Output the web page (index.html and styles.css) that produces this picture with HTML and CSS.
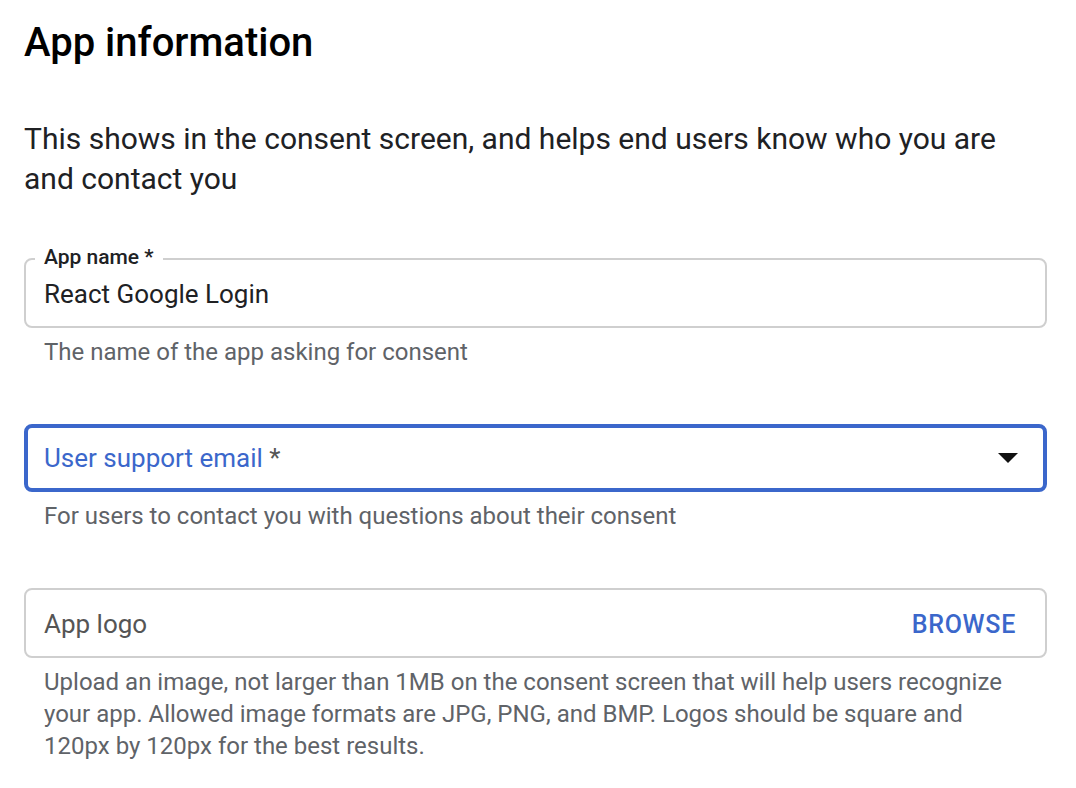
FILE: index.html
```html
<!DOCTYPE html>
<html lang="en">
<head>
<meta charset="utf-8">
<title>App information</title>
<link rel="stylesheet" href="styles.css">
</head>
<body>
<main class="page">
  <h1 class="title">App information</h1>
  <p class="intro">This shows in the consent screen, and helps end users know who you are and contact you</p>

  <div class="field-group first">
    <div class="field">
      <span class="float-label">App name *</span>
      <span class="value">React Google Login</span>
    </div>
    <p class="hint">The name of the app asking for consent</p>
  </div>

  <div class="field-group">
    <div class="field field-focused">
      <span class="placeholder-blue">User support email <span class="req">*</span></span>
      <svg class="caret" width="20" height="10" viewBox="0 0 20 10" aria-hidden="true"><path d="M0 0h20L10 10z" fill="#111"/></svg>
    </div>
    <p class="hint">For users to contact you with questions about their consent</p>
  </div>

  <div class="field-group">
    <div class="field">
      <span class="placeholder">App logo</span>
      <span class="browse">BROWSE</span>
    </div>
    <p class="hint">Upload an image, not larger than 1MB on the consent screen that will help users recognize your app. Allowed image formats are JPG, PNG, and BMP. Logos should be square and 120px by 120px for the best results.</p>
  </div>
</main>
</body>
</html>
```

FILE: styles.css
```css
* { box-sizing: border-box; }
html, body { margin: 0; padding: 0; background: #fff; }
body {
  font-family: Roboto, "Noto Sans", Arial, sans-serif;
  color: #202124;
}
.page {
  width: 1076px;
  padding: 0 29px 0 24px;
}
.title {
  margin: 0;
  padding-top: 19px;
  font-size: 40px;
  line-height: 48px;
  font-weight: 500;
  color: #000;
}
.intro {
  margin: 52px 0 0;
  font-size: 30px;
  line-height: 40px;
  color: #202124;
  width: 1010px;
}
.field-group {
  margin-top: 57px;
}
.field-group.first { margin-top: 59px; }
.field {
  position: relative;
  height: 70px;
  border: 2px solid #cfcfcf;
  border-radius: 8px;
  display: flex;
  align-items: center;
  padding: 2px 29px 0 18px;
}
.field-focused {
  height: 68px;
  border: 4px solid #3b67cb;
  padding: 0 25px 0 16px;
}
.float-label {
  position: absolute;
  left: 9px;
  top: -15px;
  padding: 0 9px;
  background: #fff;
  font-size: 21px;
  line-height: 24px;
  font-weight: 500;
  color: #202124;
}
.value {
  font-size: 26px;
  color: #202124;
}
.placeholder-blue {
  flex: 1;
  font-size: 26px;
  color: #3b67cb;
}
.req { color: #555; }
.placeholder {
  flex: 1;
  font-size: 26px;
  color: #555;
}
.browse {
  font-size: 25px;
  font-weight: 500;
  color: #3b67cb;
  letter-spacing: 0.7px;
}
.caret { display: block; }
.hint {
  margin: 8px 0 0 20px;
  font-size: 24px;
  line-height: 32px;
  color: #5f6368;
  width: 975px;
}
.field-group + .field-group { margin-top: 56px; }
```
